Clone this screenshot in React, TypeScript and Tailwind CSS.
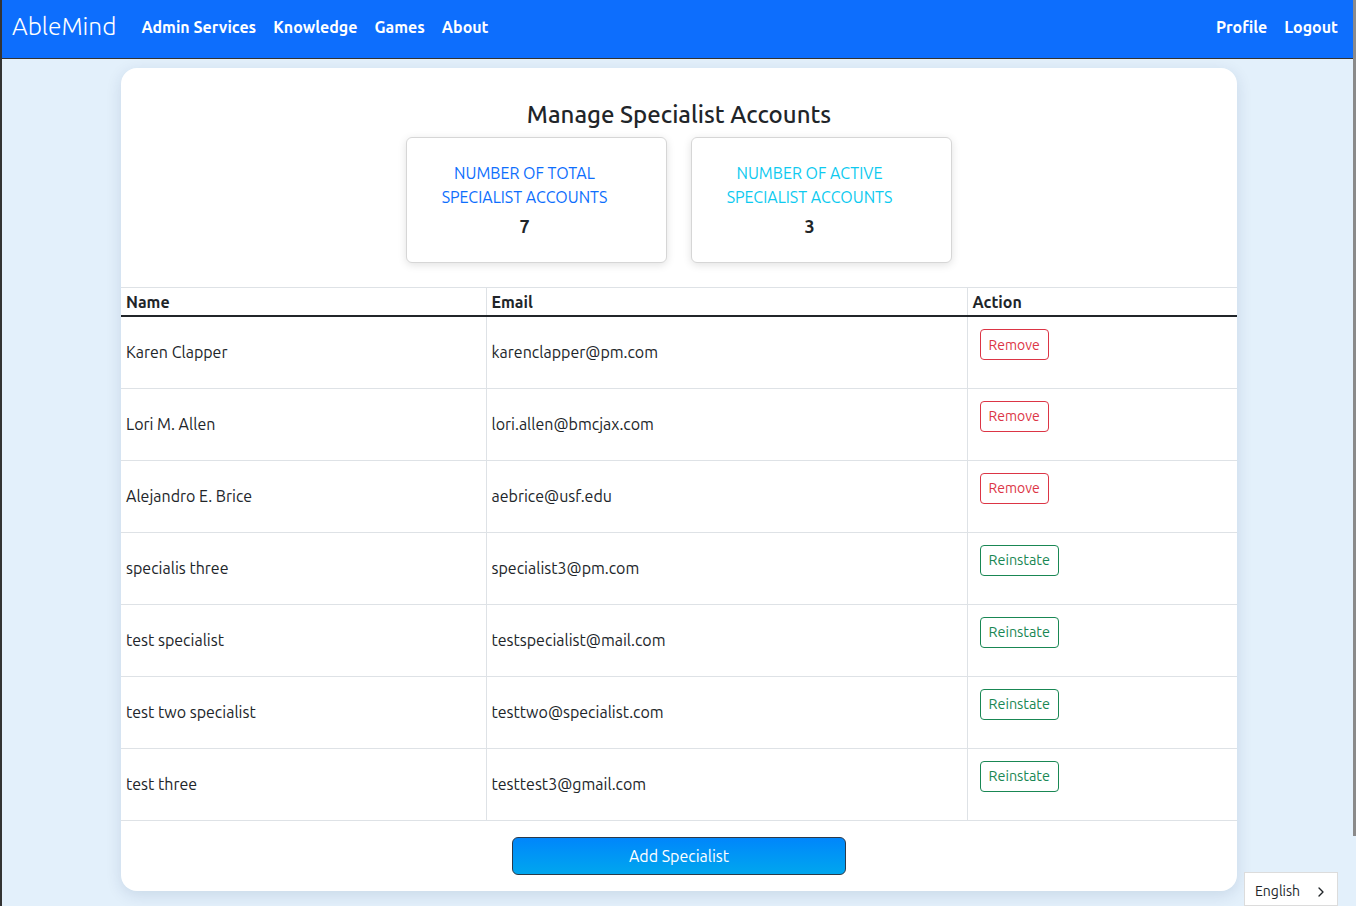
import { ChevronRight } from "lucide-react";

type Specialist = {
  name: string;
  email: string;
  active: boolean;
};

const specialists: Specialist[] = [
  { name: "Karen Clapper", email: "karenclapper@pm.com", active: true },
  { name: "Lori M. Allen", email: "lori.allen@bmcjax.com", active: true },
  { name: "Alejandro E. Brice", email: "aebrice@usf.edu", active: true },
  { name: "specialis three", email: "specialist3@pm.com", active: false },
  { name: "test specialist", email: "testspecialist@mail.com", active: false },
  { name: "test two specialist", email: "testtwo@specialist.com", active: false },
  { name: "test three", email: "testtest3@gmail.com", active: false },
];

function StatCard({ label, value, color }: { label: string[]; value: number; color: string }) {
  return (
    <div className="flex h-[126px] w-[261px] flex-col items-center rounded-md border border-[#d6d6d6] bg-white pr-[24px] pt-[23px] shadow-[0_2px_8px_rgba(0,0,0,0.12)]">
      <div className={`text-center text-[16px] leading-[24px] ${color}`}>
        {label.map((l) => (
          <div key={l}>{l}</div>
        ))}
      </div>
      <div className="mt-[5px] text-[18px] font-bold leading-[24px] text-[#212529]">{value}</div>
    </div>
  );
}

export default function App() {
  const active = specialists.filter((s) => s.active).length;

  return (
    <div
      className="relative min-h-[906px] border-l-2 border-[#333] bg-[#e3f0fb] text-[#212529]"
      style={{ fontFamily: "Ubuntu, 'Noto Sans', sans-serif" }}
    >
      <nav className="flex h-[59px] items-center border-b border-[#333] bg-[#0d6efd] pb-[5px] pl-[10px] pr-[18px] text-white">
        <span className="mr-[25px] text-[24.5px] font-light">AbleMind</span>
        <div className="flex gap-[17px] text-[16px] font-bold">
          <span>Admin Services</span>
          <span>Knowledge</span>
          <span>Games</span>
          <span>About</span>
        </div>
        <div className="ml-auto flex gap-[17px] text-[16px] font-bold">
          <span>Profile</span>
          <span>Logout</span>
        </div>
      </nav>

      <div className="flex justify-center pt-[9px]">
        <div className="w-[1116px] overflow-hidden rounded-[16px] bg-white shadow-[0_4px_16px_rgba(0,40,90,0.12)]">
          <h1 className="pt-[30px] text-center text-[24px] font-medium leading-[34px]">Manage Specialist Accounts</h1>
          <div className="mt-[5px] flex justify-center gap-[24px]">
            <StatCard label={["NUMBER OF TOTAL", "SPECIALIST ACCOUNTS"]} value={specialists.length} color="text-[#0d6efd]" />
            <StatCard label={["NUMBER OF ACTIVE", "SPECIALIST ACCOUNTS"]} value={active} color="text-[#0dcaf0]" />
          </div>

          <table className="mt-[24px] w-full border-collapse text-[16px]">
            <thead>
              <tr className="border-t border-[#dee2e6]">
                <th className="w-[365px] border-b-2 border-[#212529] px-[5px] py-[1.5px] text-left font-bold">Name</th>
                <th className="w-[481px] border-b-2 border-l border-[#212529] border-l-[#dee2e6] px-[5px] py-[1.5px] text-left font-bold">Email</th>
                <th className="border-b-2 border-l border-[#212529] border-l-[#dee2e6] px-[5px] py-[1.5px] text-left font-bold">Action</th>
              </tr>
            </thead>
            <tbody>
              {specialists.map((s) => (
                <tr key={s.email} className="h-[72px] border-b border-[#dee2e6]">
                  <td className="px-[5px] align-middle">{s.name}</td>
                  <td className="border-l border-[#dee2e6] px-[5px] align-middle">{s.email}</td>
                  <td className="border-l border-[#dee2e6] pl-[12px] pt-[12px] align-top">
                    {s.active ? (
                      <button
                        type="button"
                        className="h-[31px] rounded-[4px] border border-[#dc3545] px-[8px] pt-[1px] text-[14px] text-[#dc3545]"
                      >
                        Remove
                      </button>
                    ) : (
                      <button
                        type="button"
                        className="h-[31px] rounded-[4px] border border-[#198754] px-[8px] pt-[1px] text-[14.4px] text-[#198754]"
                      >
                        Reinstate
                      </button>
                    )}
                  </td>
                </tr>
              ))}
            </tbody>
          </table>

          <div className="flex justify-center pb-[16px] pt-[16px]">
            <button
              type="button"
              className="h-[38px] w-[334px] rounded-[6px] border border-[#2b3a4a] bg-gradient-to-b from-[#0286fb] to-[#00a6ee] text-[16px] text-white"
            >
              Add Specialist
            </button>
          </div>
        </div>
      </div>

      <div className="absolute bottom-0 right-[18px] flex h-[34px] w-[94px] items-center justify-between border border-[#dcdcdc] bg-white pl-[10px] pr-[8px] pt-[5px] text-[14px]">
        <span>English</span>
        <ChevronRight size={16} strokeWidth={2} />
      </div>
      <div className="absolute right-0 top-0 h-[836px] w-[3px] bg-[#8a8a8a]" />
    </div>
  );
}
